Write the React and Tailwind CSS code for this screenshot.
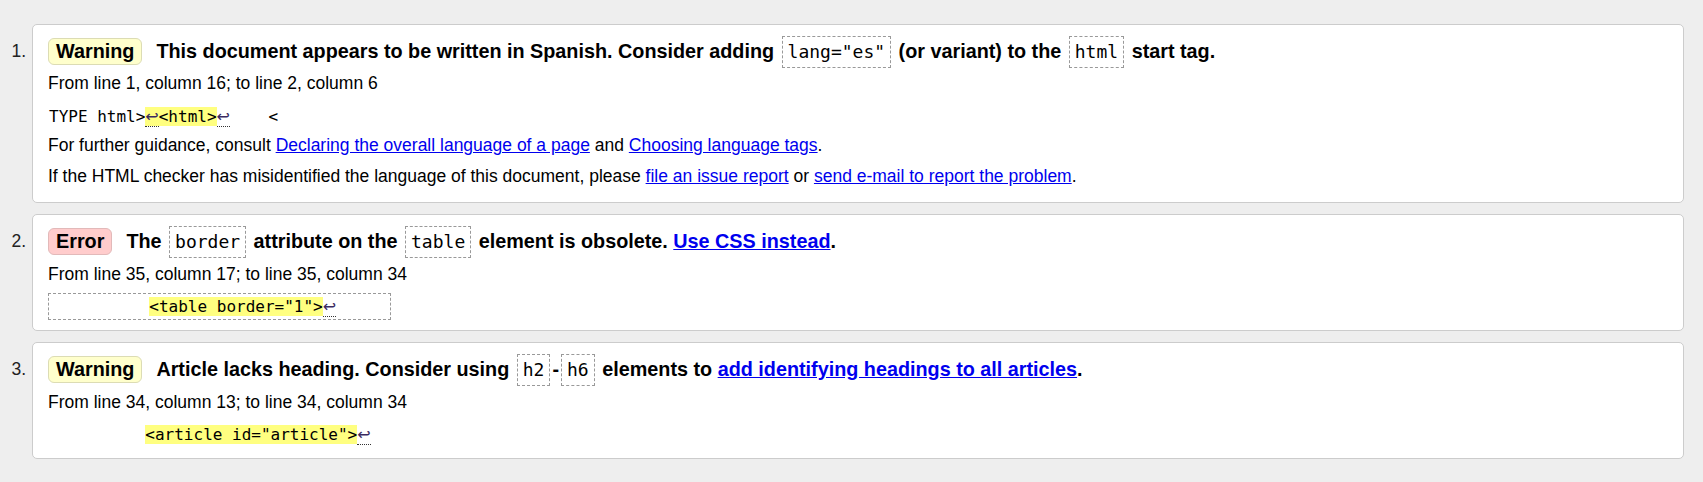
import React from "react";

const Badge = ({ kind }) =>
  kind === "error" ? (
    <span className="flex h-[27px] items-center rounded-[6px] border border-[#e2b9b9] bg-[#ffcccc] px-[7px] font-bold">
      Error
    </span>
  ) : (
    <span className="flex h-[27px] items-center rounded-[6px] border border-[#dcdcb4] bg-[#ffffcc] px-[7px] font-bold">
      Warning
    </span>
  );

const Code = ({ children }) => (
  <code className="mx-[2px] flex h-[32px] items-center border border-dashed border-[#999] px-[5px] font-['DejaVu_Sans_Mono',monospace] text-[18px] font-normal">
    {children}
  </code>
);

const T = ({ children, className = "" }) => (
  <span className={"whitespace-pre " + className}>{children}</span>
);

const Ret = () => (
  <span className="border-b border-dotted border-[#333] font-['DejaVu_Sans',sans-serif] text-[#3a2a60]">↩</span>
);

const Hl = ({ children }) => <span className="bg-[#ffff80]">{children}</span>;

const A = ({ children, bold }) => (
  <a href="#" className={"text-[#0000ee] underline" + (bold ? " font-bold" : "")}>
    {children}
  </a>
);

const Row = ({ children }) => <div className="flex h-[31px] items-center whitespace-pre">{children}</div>;

const Item = ({ n, children }) => (
  <li className="flex">
    <div className="flex h-[33px] w-[32px] shrink-0 items-center justify-end pr-[6px] mt-[11px] text-[#222]">
      {n}.
    </div>
    <div className="flex-1 rounded-[5px] border border-[#cccccc] bg-white px-[15px] pt-[10px] pb-[10px]">
      {children}
    </div>
  </li>
);

const Heading = ({ children }) => (
  <div className="flex h-[33px] items-center text-[19.8px] font-bold">{children}</div>
);

export default function App() {
  return (
    <div className="min-h-screen bg-[#eeeeee] pt-[24px] pr-[19px] font-['Liberation_Sans',Arial,sans-serif] text-[17.5px] text-black">
      <ol className="flex flex-col gap-[11px]">
        <Item n={1}>
          <Heading>
            <Badge kind="warning" />
            <T className="ml-[14px]">This document appears to be written in Spanish. Consider adding </T>
            <Code>lang="es"</Code>
            <T> (or variant) to the </T>
            <Code>html</Code>
            <T> start tag.</T>
          </Heading>
          <Row>From line 1, column 16; to line 2, column 6</Row>
          <div className="flex h-[31px] items-end">
            <pre className="border border-transparent py-[2px] font-['DejaVu_Sans_Mono',monospace] text-[16px] leading-[21px]">
              TYPE html&gt;<Hl><Ret />&lt;html&gt;</Hl><Ret />{"    <"}
            </pre>
          </div>
          <Row>
            For further guidance, consult <A>Declaring the overall language of a page</A> and{" "}
            <A>Choosing language tags</A>.
          </Row>
          <Row>
            If the HTML checker has misidentified the language of this document, please <A>file an issue report</A> or{" "}
            <A>send e-mail to report the problem</A>.
          </Row>
        </Item>

        <Item n={2}>
          <Heading>
            <Badge kind="error" />
            <T className="ml-[14px]">The </T>
            <Code>border</Code>
            <T> attribute on the </T>
            <Code>table</Code>
            <T> element is obsolete. </T>
            <A bold>Use CSS instead</A>
            <T>.</T>
          </Heading>
          <div className="flex h-[33px] items-center whitespace-pre">From line 35, column 17; to line 35, column 34</div>
          <div className="flex h-[29px] items-end">
            <pre className="w-[343px] border border-dashed border-[#999] px-[4px] py-[2px] font-['DejaVu_Sans_Mono',monospace] text-[16px] leading-[21px]">
              {"          "}
              <Hl>&lt;table border="1"&gt;</Hl>
              <Ret />
            </pre>
          </div>
        </Item>

        <Item n={3}>
          <Heading>
            <Badge kind="warning" />
            <T className="ml-[14px]">Article lacks heading. Consider using </T>
            <Code>h2</Code>
            <T>-</T>
            <Code>h6</Code>
            <T> elements to </T>
            <A bold>add identifying headings to all articles</A>
            <T>.</T>
          </Heading>
          <div className="flex h-[33px] items-center whitespace-pre">From line 34, column 13; to line 34, column 34</div>
          <div className="flex h-[29px] items-end">
            <pre className="border border-transparent py-[2px] font-['DejaVu_Sans_Mono',monospace] text-[16px] leading-[21px]">
              {"          "}
              <Hl>&lt;article id="article"&gt;</Hl>
              <Ret />
            </pre>
          </div>
        </Item>
      </ol>
    </div>
  );
}
